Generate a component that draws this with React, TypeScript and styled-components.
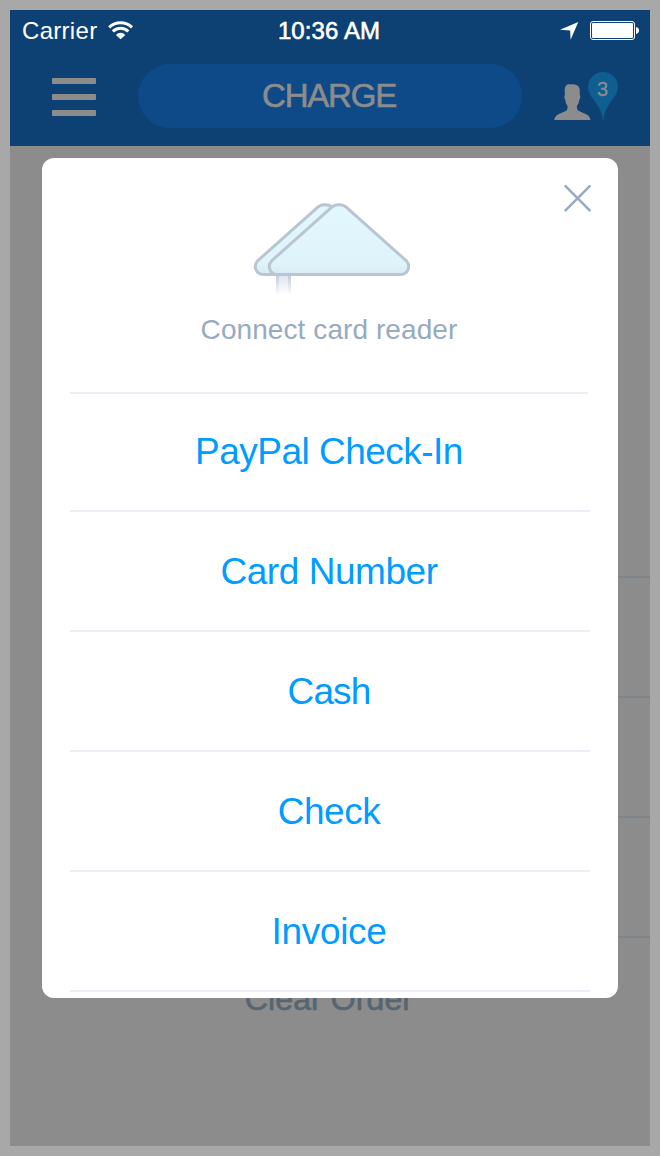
import React from "react";
import styled, { createGlobalStyle } from "styled-components";

const GlobalStyle = createGlobalStyle`
  * { box-sizing: border-box; }
  body {
    margin: 0;
    background: #a8a8a8;
    font-family: "Liberation Sans", Arial, Helvetica, sans-serif;
  }
  button { font: inherit; border: 0; padding: 0; background: none; }
`;

const Stage = styled.div`
  height: 1156px;
  padding: 10px;
  background: #a8a8a8;
`;

const Screen = styled.main`
  position: relative;
  display: flex;
  flex-direction: column;
  width: 640px;
  height: 1136px;
  background: #8c8c8c;
  overflow: hidden;
`;

const Header = styled.header`
  height: 136px;
  background: #0e4173;
`;

const StatusBar = styled.div`
  display: grid;
  grid-template-columns: 1fr auto 1fr;
  align-items: center;
  height: 40px;
  padding: 1px 11px 0 12px;
  color: #fff;
`;

const StatusGroup = styled.div<{ $end?: boolean }>`
  display: flex;
  align-items: center;
  justify-content: ${(p) => (p.$end ? "flex-end" : "flex-start")};
  gap: 11px;
`;

const Label = styled.span<{ $size: number; $spacing?: number; $stroke?: number }>`
  display: block;
  font-size: ${(p) => p.$size}px;
  line-height: 1.2;
  letter-spacing: ${(p) => p.$spacing ?? 0}px;
  -webkit-text-stroke: ${(p) => p.$stroke ?? 0}px currentColor;
  white-space: nowrap;
`;

const StatusLabel = styled(Label)`
  padding-top: 2px;
`;

const ClockLabel = styled(StatusLabel)`
  padding-right: 3px;
`;

const NavBar = styled.nav`
  display: flex;
  align-items: flex-start;
  height: 96px;
  padding: 14px 32px 0 42px;
`;

const MenuButton = styled.button`
  display: flex;
  flex-direction: column;
  gap: 10px;
  width: 44px;
  margin: 14px 42px 0 0;
`;

const MenuBar = styled.span`
  height: 6px;
  border-radius: 1px;
  background: #8c8c8c;
`;

const ChargeButton = styled.button`
  display: flex;
  align-items: center;
  justify-content: center;
  width: 384px;
  height: 64px;
  padding-right: 2px;
  border-radius: 32px;
  background: #0e4a87;
  color: #8c8c8c;
`;

const Customers = styled.button`
  display: flex;
  align-items: flex-end;
  width: 64px;
  height: 48px;
  margin: 8px 0 0 32px;
`;

const Pin = styled.span`
  position: relative;
  display: block;
  width: 30px;
  height: 48px;
  margin-left: -3px;
  color: #8c8c8c;
`;

const PinCount = styled.span`
  position: absolute;
  inset: 6px 1px auto 0;
  text-align: center;
  font-size: 20px;
  line-height: 23px;
  -webkit-text-stroke: 0.3px currentColor;
`;

const Order = styled.section`
  display: flex;
  flex-direction: column;
  padding: 430px 0 0 32px;
`;

const OrderRow = styled.div`
  height: 120px;
  border-top: 2px solid #7d8489;
`;

const ClearOrder = styled.button`
  display: flex;
  justify-content: center;
  height: 120px;
  padding: 42px 34px 0 0;
  border-top: 2px solid #7d8489;
  color: #566570;
`;

const Dialog = styled.section`
  position: absolute;
  left: 32px;
  top: 148px;
  width: 576px;
  height: 840px;
  padding: 0 28px;
  border-radius: 12px;
  background: #fff;
`;

const Reader = styled.div`
  display: flex;
  flex-direction: column;
  align-items: center;
  width: 518px;
  height: 236px;
  padding-top: 42px;
  border-bottom: 2px solid #e9eff4;
  color: #98aabf;
`;

const ReaderLabel = styled.div`
  margin-top: 15px;
`;

const Options = styled.div`
  margin-top: -2px;
`;

const Option = styled.button`
  display: flex;
  justify-content: center;
  width: 520px;
  height: 120px;
  padding: 38px 2px 0 0;
  border-bottom: 2px solid #e9eff4;
  color: #009cff;
`;

const CloseButton = styled.button`
  position: absolute;
  top: 26px;
  right: 26px;
  width: 29px;
  height: 29px;
`;

const WifiIcon = () => (
  <svg width="26" height="20" viewBox="0 0 26 20" fill="none" stroke="#fff">
    <path d="M1.2 7.300 A16.5 16.5 0 0 1 24 7.300" strokeWidth="3" />
    <path d="M4.900 11.500 A10.8 10.8 0 0 1 20.300 11.500" strokeWidth="3" />
    <path d="M7.900 14.900 A6.200 6.200 0 0 1 17.300 14.900 L12.600 19.300 Z" fill="#fff" stroke="none" />
  </svg>
);

const LocationIcon = () => (
  <svg width="19" height="19" viewBox="0 0 19 19">
    <path d="M18.3 .9 L10.6 18.8 L10.2 9.500 L0 8.700 Z" fill="#fff" />
  </svg>
);

const BatteryIcon = () => (
  <svg width="49" height="19" viewBox="0 0 49 19">
    <rect x=".5" y=".5" width="44" height="18" rx="2.5" fill="none" stroke="#fff" />
    <rect x="2" y="2" width="41" height="15" rx="1" fill="#fff" />
    <path d="M46 6 C48 6.3 49 7.7 49 9.5 C49 11.3 48 12.7 46 13 Z" fill="#fff" />
  </svg>
);

const PersonIcon = () => (
  <svg width="37" height="36" viewBox="0 0 37 36">
    <path
      d="M.3 36 C.8 33 2 31.4 4.500 30.200 C8.500 28.200 12.500 27.400 13.200 25.200 C13.700 23.800 13.700 22.600 13.300 21.400 C12 20 11.500 18 11.300 15.800 C10.300 14.800 10.100 11.400 11 10.600 C10.500 7 10.600 3.500 12 1.600 C13.300 .2 15 -.2 16.500 .5 C20 -.1 23.500 .8 24.800 3 C25.900 5 26 8 25.700 10.600 C26.600 11.400 26.300 15 25.300 15.800 C25.100 18 24.600 20 23.100 21.400 C22.700 22.600 22.800 23.800 23.300 25.200 C24.200 27.400 28.200 28.200 32.200 30.200 C34.700 31.400 36 33 36.500 36 Z"
      fill="#8c8c8c"
    />
  </svg>
);

const PinIcon = () => (
  <svg width="30" height="48" viewBox="0 0 30 48">
    <path
      d="M14.700 48 C14.200 40 10.2 33.8 5.5 27.5 C2.2 23.2 0 19.6 0 15 A15 15 0 0 1 30 15 C30 19.6 27.8 23.2 24.5 27.5 C19.8 33.8 16 40 15.500 48 Z"
      fill="#0e5e92"
    />
  </svg>
);

const readerShape =
  "M81 9.600 C87 3.200 95 3.200 101 9.600 L158 60.500 C163.500 66 160 74.500 152.500 74.500 H29.500 C22 74.500 18.500 66 24 60.500 Z";

const ReaderIcon = () => (
  <svg width="162" height="98" viewBox="0 0 162 98">
    <defs>
      <linearGradient id="face" x1="0" y1="0" x2="0" y2="1">
        <stop offset="0" stopColor="#e3f7ff" />
        <stop offset=".85" stopColor="#dff3fa" />
        <stop offset="1" stopColor="#d8ebf3" />
      </linearGradient>
      <linearGradient id="plug" x1="0" y1="0" x2="0" y2="1">
        <stop offset="0" stopColor="#dde4ee" />
        <stop offset="1" stopColor="#fff" />
      </linearGradient>
      <linearGradient id="edge" x1="0" y1="0" x2="0" y2="1">
        <stop offset="0" stopColor="#c0cad7" />
        <stop offset="1" stopColor="#fff" />
      </linearGradient>
    </defs>
    <rect x="28" y="75" width="15" height="20" fill="url(#plug)" />
    <rect x="28" y="75" width="3" height="20" fill="url(#edge)" />
    <rect x="40" y="75" width="3" height="20" fill="url(#edge)" />
    <g stroke="#bac5d2" strokeWidth="3" fill="url(#face)">
      <path d={readerShape} transform="translate(-14 0)" />
      <path d={readerShape} />
    </g>
  </svg>
);

const CloseIcon = () => (
  <svg width="29" height="29" viewBox="0 0 29 29">
    <path d="M2.500 2.200 L26.700 26.400 M26.700 2.200 L2.500 26.400" stroke="#98aabf" strokeWidth="2.500" strokeLinecap="round" />
  </svg>
);

const options = [
  { name: "PayPal Check-In", spacing: -0.52 },
  { name: "Card Number", spacing: -0.45 },
  { name: "Cash", spacing: -0.9 },
  { name: "Check", spacing: -0.45 },
  { name: "Invoice", spacing: -0.3 },
];

export default function App() {
  return (
    <Stage>
      <GlobalStyle />
      <Screen>
        <Header>
          <StatusBar>
            <StatusGroup>
              <StatusLabel $size={24} $spacing={0.3}>Carrier</StatusLabel>
              <WifiIcon />
            </StatusGroup>
            <ClockLabel $size={24} $spacing={0.1} $stroke={0.6}>10:36 AM</ClockLabel>
            <StatusGroup $end>
              <LocationIcon />
              <BatteryIcon />
            </StatusGroup>
          </StatusBar>
          <NavBar>
            <MenuButton aria-label="Menu">
              <MenuBar />
              <MenuBar />
              <MenuBar />
            </MenuButton>
            <ChargeButton>
              <Label $size={33} $spacing={-1.2} $stroke={0.6}>CHARGE</Label>
            </ChargeButton>
            <Customers aria-label="Customers">
              <PersonIcon />
              <Pin>
                <PinIcon />
                <PinCount>3</PinCount>
              </Pin>
            </Customers>
          </NavBar>
        </Header>
        <Order>
          <OrderRow />
          <OrderRow />
          <OrderRow />
          <ClearOrder>
            <Label $size={32} $spacing={0.1} $stroke={0.6}>Clear Order</Label>
          </ClearOrder>
        </Order>
        <Dialog role="dialog">
          <Reader>
            <ReaderIcon />
            <ReaderLabel>
              <Label $size={28} $spacing={0.08}>Connect card reader</Label>
            </ReaderLabel>
          </Reader>
          <Options>
            {options.map((o) => (
              <Option key={o.name}>
                <Label $size={37} $spacing={o.spacing}>{o.name}</Label>
              </Option>
            ))}
          </Options>
          <CloseButton aria-label="Close">
            <CloseIcon />
          </CloseButton>
        </Dialog>
      </Screen>
    </Stage>
  );
}
